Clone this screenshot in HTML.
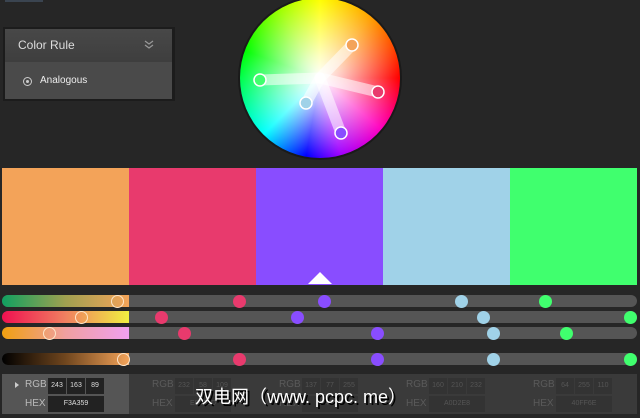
<!DOCTYPE html><html><head><style>
*{margin:0;padding:0;box-sizing:border-box}
body{width:640px;height:418px;background:#262626;position:relative;overflow:hidden;font-family:"Liberation Sans",sans-serif}
.a{position:absolute}
.sw{position:absolute;top:168px;height:117px}
.track{position:absolute;left:2px;width:635px;height:12px;border-radius:6px;background:#555}
.g{position:absolute;left:0;top:0;width:127px;height:12px;border-radius:6px 0 0 6px}
.d{position:absolute;width:13px;height:13px;border-radius:50%;top:-0.5px;margin-left:-6.5px}
.h{position:absolute;width:13px;height:13px;border-radius:50%;top:-0.5px;margin-left:-6.5px;border:1.3px solid #fde4c8}
.box{position:absolute;height:16px;background:#222;color:#ddd;font-size:7px;text-align:center;line-height:16px}
.lbl{position:absolute;font-size:10px;color:#bbb}
.dim .box{background:#333;color:#555}.dim .lbl{color:#5a5a5a}
</style></head><body>
<div class="a" style="left:5px;top:0;width:38px;height:2px;background:#3a4450"></div>
<div class="a" style="left:3px;top:27px;width:172px;height:74px;background:#1c1c1c"></div>
<div class="a" style="left:5px;top:29px;width:167px;height:33px;background:linear-gradient(#484848,#3e3e3e)"></div>
<div class="a" style="left:18px;top:38px;color:#ddd;font-size:12px">Color Rule</div>
<svg class="a" style="left:143px;top:39px" width="12" height="10"><path d="M2 2l4 3 4-3M2 6l4 3 4-3" fill="none" stroke="#999" stroke-width="1.2"/></svg>
<div class="a" style="left:5px;top:62px;width:167px;height:37px;background:#4a4a4a"></div>
<div class="a" style="left:23px;top:77px;width:9px;height:9px;border:1px solid #ccc;border-radius:50%"></div>
<div class="a" style="left:26px;top:80px;width:3px;height:3px;background:#ccc;border-radius:50%"></div>
<div class="a" style="left:40px;top:75px;color:#eee;font-size:10px">Analogous</div>

<div class="a" style="left:238px;top:-4px;width:164px;height:164px;border-radius:50%;background:#1a1a1a"></div>
<div class="a" style="left:240px;top:-2px;width:160px;height:160px;border-radius:50%;background:conic-gradient(#ff0 0deg,#ffa000 40deg,#ff0000 90deg,#ff00c0 130deg,#a000ff 165deg,#0000ff 190deg,#00ffff 225deg,#00ff60 265deg,#00ff00 290deg,#a0ff00 330deg,#ff0 360deg)"></div>
<div class="a" style="left:240px;top:-2px;width:160px;height:160px;border-radius:50%;background:radial-gradient(circle,#fff 0%,rgba(255,255,255,.75) 20%,rgba(255,255,255,0) 70%)"></div>
<svg class="a" style="left:240px;top:-2px" width="160" height="160">
<g stroke="rgba(255,255,255,.55)" stroke-width="11" stroke-linecap="round">
<line x1="80" y1="80" x2="112" y2="47"/><line x1="80" y1="80" x2="138" y2="94"/><line x1="80" y1="80" x2="101" y2="135"/><line x1="80" y1="80" x2="66" y2="105"/><line x1="80" y1="80" x2="20" y2="82"/></g>
<g stroke="#fff" stroke-width="1.5">
<circle cx="112" cy="47" r="6" fill="#f3a359"/><circle cx="138" cy="94" r="6" fill="#e83a6d"/><circle cx="101" cy="135" r="6" fill="#894dff"/><circle cx="66" cy="105" r="6" fill="#a0d2e8"/><circle cx="20" cy="82" r="6" fill="#40ff6e"/></g></svg>

<div class="sw" style="left:2px;width:127px;background:#f3a359"></div>
<div class="sw" style="left:129px;width:127px;background:#e83a6d"></div>
<div class="sw" style="left:256px;width:127px;background:#894dff"></div>
<div class="sw" style="left:383px;width:127px;background:#a0d2e8"></div>
<div class="sw" style="left:510px;width:127px;background:#40ff6e"></div>
<div class="a" style="left:308px;top:272px;width:0;height:0;border-left:12px solid transparent;border-right:12px solid transparent;border-bottom:12px solid #fff"></div>

<div class="track" style="top:295px"><div class="g" style="background:linear-gradient(90deg,#10a060,#a0a050,#f3a359)"></div>
<div class="h" style="left:115px"></div><div class="d" style="left:237px;background:#e83a6d"></div><div class="d" style="left:322px;background:#894dff"></div><div class="d" style="left:459px;background:#a0d2e8"></div><div class="d" style="left:543px;background:#40ff6e"></div></div>
<div class="track" style="top:311px"><div class="g" style="background:linear-gradient(90deg,#f01050,#f08060,#f0f040)"></div>
<div class="h" style="left:79px"></div><div class="d" style="left:159px;background:#e83a6d"></div><div class="d" style="left:295px;background:#894dff"></div><div class="d" style="left:481px;background:#a0d2e8"></div><div class="d" style="left:628px;background:#40ff6e"></div></div>
<div class="track" style="top:327px"><div class="g" style="background:linear-gradient(90deg,#f0a010,#f0a0a0,#f0a0f0)"></div>
<div class="h" style="left:47px"></div><div class="d" style="left:182px;background:#e83a6d"></div><div class="d" style="left:375px;background:#894dff"></div><div class="d" style="left:491px;background:#a0d2e8"></div><div class="d" style="left:564px;background:#40ff6e"></div></div>
<div class="track" style="top:353px"><div class="g" style="background:linear-gradient(90deg,#000,#70461e,#f3a359)"></div>
<div class="h" style="left:121px"></div><div class="d" style="left:237px;background:#e83a6d"></div><div class="d" style="left:375px;background:#894dff"></div><div class="d" style="left:491px;background:#a0d2e8"></div><div class="d" style="left:628px;background:#40ff6e"></div></div>

<div class="a" style="left:2px;top:374px;width:635px;height:40px;background:#3a3a3a"></div>
<div class="a" style="left:2px;top:374px;width:127px;height:40px;background:#555"></div>
<div class="a" style="left:15px;top:382px;width:0;height:0;border-top:3px solid transparent;border-bottom:3px solid transparent;border-left:4px solid #ccc"></div>
<div>
<div class="lbl" style="left:25px;top:379px">RGB</div><div class="lbl" style="left:25px;top:398px">HEX</div>
<div class="box" style="left:48px;top:378px;width:18px">243</div><div class="box" style="left:67px;top:378px;width:18px">163</div><div class="box" style="left:86px;top:378px;width:18px">89</div>
<div class="box" style="left:48px;top:396px;width:56px">F3A359</div></div>
<div class="dim">
<div class="lbl" style="left:152px;top:379px">RGB</div><div class="lbl" style="left:152px;top:398px">HEX</div>
<div class="box" style="left:175px;top:378px;width:18px">232</div><div class="box" style="left:194px;top:378px;width:18px">58</div><div class="box" style="left:213px;top:378px;width:18px">109</div>
<div class="box" style="left:175px;top:396px;width:56px">E83A6D</div>
<div class="lbl" style="left:279px;top:379px">RGB</div><div class="lbl" style="left:279px;top:398px">HEX</div>
<div class="box" style="left:302px;top:378px;width:18px">137</div><div class="box" style="left:321px;top:378px;width:18px">77</div><div class="box" style="left:340px;top:378px;width:18px">255</div>
<div class="box" style="left:302px;top:396px;width:56px">894DFF</div>
<div class="lbl" style="left:406px;top:379px">RGB</div><div class="lbl" style="left:406px;top:398px">HEX</div>
<div class="box" style="left:429px;top:378px;width:18px">160</div><div class="box" style="left:448px;top:378px;width:18px">210</div><div class="box" style="left:467px;top:378px;width:18px">232</div>
<div class="box" style="left:429px;top:396px;width:56px">A0D2E8</div>
<div class="lbl" style="left:533px;top:379px">RGB</div><div class="lbl" style="left:533px;top:398px">HEX</div>
<div class="box" style="left:556px;top:378px;width:18px">64</div><div class="box" style="left:575px;top:378px;width:18px">255</div><div class="box" style="left:594px;top:378px;width:18px">110</div>
<div class="box" style="left:556px;top:396px;width:56px">40FF6E</div></div>
<div class="a" style="left:195px;top:383px;color:#fff;font-size:18px;font-family:'WenQuanYi Zen Hei',sans-serif;text-shadow:2px 2px 0 #000;white-space:nowrap">双电网（www. pcpc. me）</div>
</body></html>
